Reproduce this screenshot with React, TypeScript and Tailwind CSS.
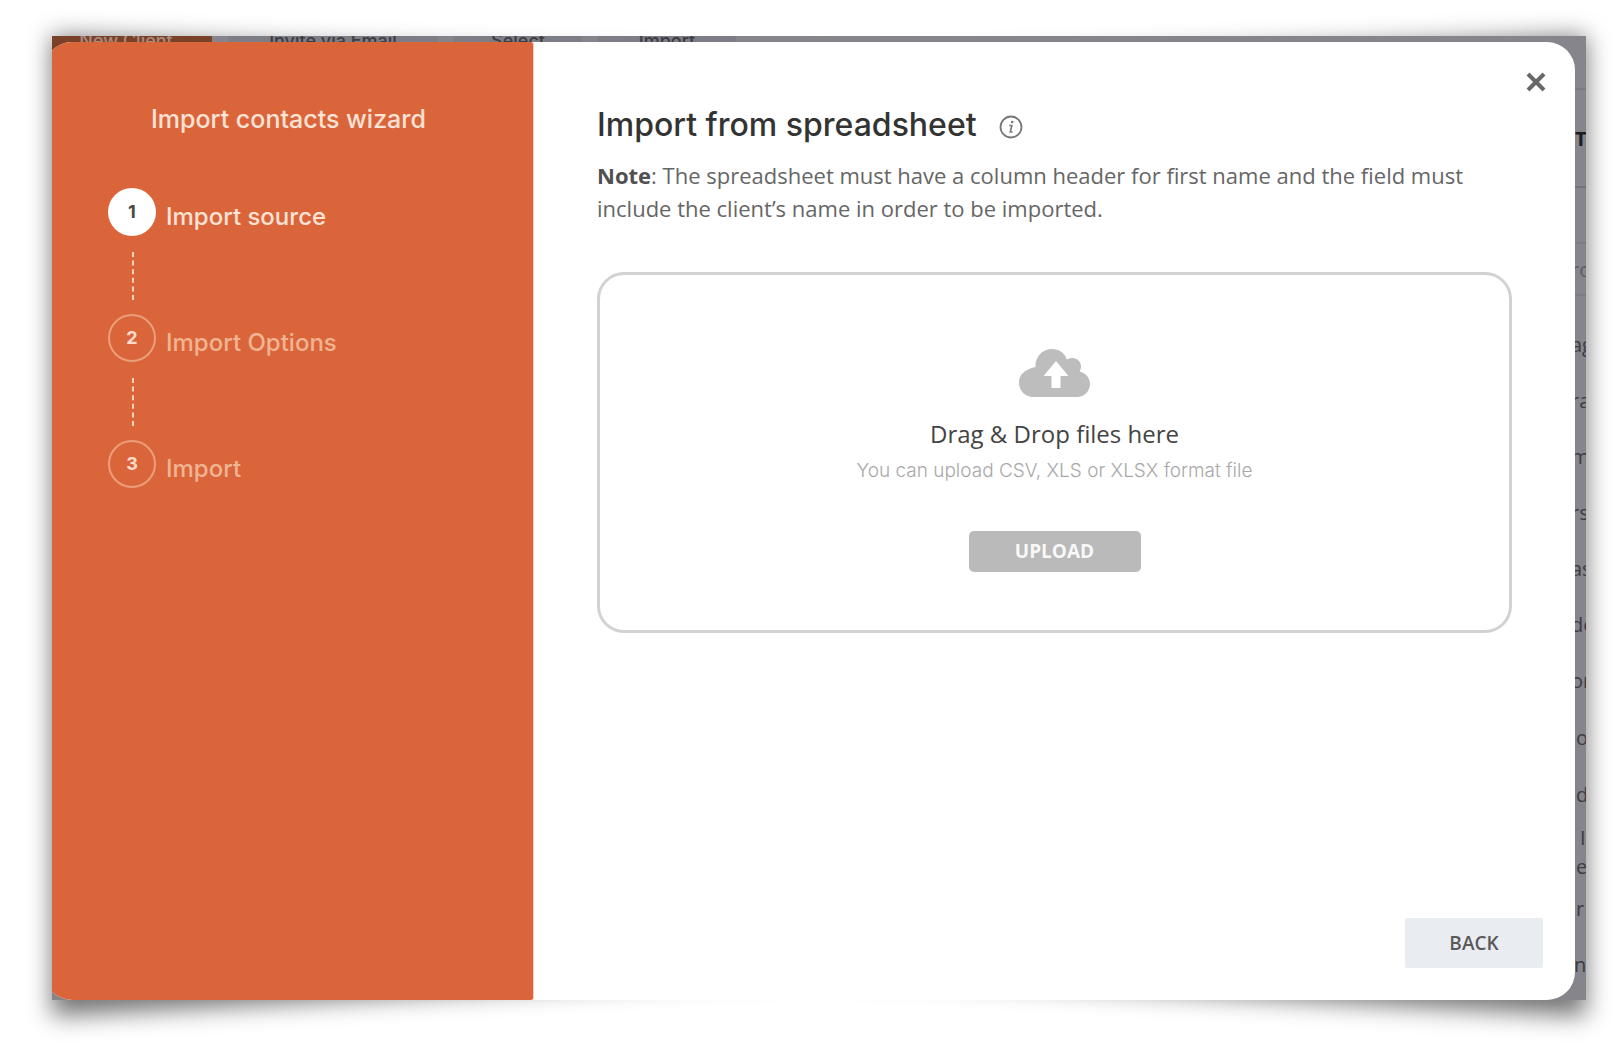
interface Step {
  label: string;
  active?: boolean;
}

const steps: Step[] = [
  { label: 'Import source', active: true },
  { label: 'Import Options' },
  { label: 'Import' },
];

// Clipped first letters of the contact rows behind the dialog
const contactRows = ['ag', 'ra', 'm', 'rs', 'as', 'de', 'or'];
const indentedRows = ['o', 'd'];

function CloudUploadIcon() {
  return (
    <svg className="h-12 w-[71px]" viewBox="0 0 71 48" aria-hidden="true">
      <path
        fill="#bdbdbd"
        d="M14 48C6 48 0 41.500 0 33.500C0 26 5 20.500 16.500 18C16 8 23 0 33 0C40 0 45.500 4 48 10.500C50 9.500 51.500 9 53.500 9C58.500 9 62 13 62 17.500C62 19.500 61.500 20.800 60.500 22.500C67 24 71 29 71 35C71 42 65.500 48 58 48Z"
      />
      <path fill="#fff" d="M37 12L49.500 27H41.500V39H32.500V27H24.500Z" />
    </svg>
  );
}

function InfoIcon() {
  return (
    <svg className="size-6" viewBox="0 0 24 24" fill="none" aria-hidden="true">
      <circle cx="12" cy="12" r="10.500" stroke="#777" strokeWidth="1.800" />
      <circle cx="13.200" cy="7" r="1.300" fill="#777" />
      <path d="M10.300 10.500H12.800L11.300 17H13.500" stroke="#777" strokeWidth="1.600" />
    </svg>
  );
}

function StepItem({ step, index, last }: { step: Step; index: number; last: boolean }) {
  return (
    <li>
      <div className="flex items-center gap-[10px]">
        <span
          className={
            step.active
              ? 'flex size-12 items-center justify-center rounded-full bg-white text-lg font-bold text-[#4a4a4a]'
              : 'flex size-12 items-center justify-center rounded-full border-2 border-[#ea9f7a] text-lg font-bold text-[#fbdccd]'
          }
        >
          {index + 1}
        </span>
        <span
          className={
            step.active
              ? 'pt-[10px] text-2xl leading-8 font-medium text-[#fde3d6]'
              : 'pt-[10px] text-2xl leading-8 font-medium text-[#f1b493]'
          }
        >
          {step.label}
        </span>
      </div>
      {!last && (
        <svg className="my-[14px] ml-6 h-[50px] w-[2px]" viewBox="0 0 2 50" aria-hidden="true">
          <line x1="1" y1="2" x2="1" y2="50" stroke="#f8d3c2" strokeWidth="2" strokeDasharray="5 3.600" />
        </svg>
      )}
    </li>
  );
}

function Backdrop() {
  return (
    <div className="absolute inset-0 flex items-start justify-between overflow-hidden bg-[#85858b]" aria-hidden="true">
      {/* Toolbar */}
      <div className="-mt-[11px] flex gap-4 text-center text-lg leading-8 font-medium text-[#3b3b41]">
        <span className="h-12 w-40 bg-[#7b4128] pr-3 text-[#a98c80]">New Client</span>
        <span className="w-[210px] bg-[#7d7d85]">Invite via Email</span>
        <span className="w-[128px] bg-[#7d7d85]">Select</span>
        <span className="w-[138px] bg-[#7d7d85]">Import</span>
      </div>

      {/* Contacts table */}
      <div className="w-[15px] shrink-0 font-['Open_Sans',sans-serif] text-xl text-[#3c3c42]">
        <div className="h-[54px] border-b-2 border-[#7a7a81]" />
        <div className="h-[98px] border-b-2 border-[#737379] pl-1 leading-[98px] font-bold text-[#1d1d22]">T</div>
        <div className="h-14 border-b-2 border-[#7c7c82]" />
        <div className="mb-[21px] h-[52px] border-b-2 border-[#7c7c82] leading-[52px] text-[#5c5c63]">ro</div>
        {contactRows.map((text) => (
          <div key={text} className="h-14 leading-14">
            {text}
          </div>
        ))}
        {indentedRows.map((text) => (
          <div key={text} className="h-[57px] pl-[5px] leading-[57px]">
            {text}
          </div>
        ))}
        <div className="h-[58px] pl-[5px] leading-[29px]">
          <div className="pl-1">I</div>
          <div>e</div>
        </div>
        <div className="h-14 pl-[5px] leading-14">r</div>
        <div className="h-14 pl-[3px] leading-14">n</div>
      </div>
    </div>
  );
}

export default function App() {
  return (
    <div className="flex min-h-screen bg-white pt-9 pr-[34px] pb-[46px] pl-[52px] font-['Inter',sans-serif]">
      <div className="relative isolate flex min-w-0 flex-1">
        {/* Lifted-corner shadow */}
        <div className="absolute inset-x-0 top-0 -bottom-4 -z-10 blur-[12px]" aria-hidden="true">
          <div className="size-full bg-black/55 [clip-path:polygon(0_0,50%_28px,100%_0,100%_100%,50%_calc(100%-44px),0_100%)]" />
        </div>

        <Backdrop />

        <div className="relative flex min-w-0 flex-1 overflow-hidden">
          <main
            role="dialog"
            aria-labelledby="dialog-title"
            className="mt-[6px] mr-[11px] -ml-2 flex min-w-0 flex-1 overflow-hidden rounded-[28px] bg-white"
          >
            {/* Steps */}
            <aside className="w-[490px] shrink-0 rounded-r-[3px] border-r border-[#f3cdbd] bg-[#db653b] pt-[61px]">
              <h2 className="text-center text-[25px] leading-8 font-medium text-[#fde3d6]">Import contacts wizard</h2>
              <ol className="mt-[53px] pl-16">
                {steps.map((step, i) => (
                  <StepItem key={step.label} step={step} index={i} last={i === steps.length - 1} />
                ))}
              </ol>
            </aside>

            {/* Upload */}
            <section className="flex min-w-0 flex-1 flex-col">
              <div className="flex justify-end pt-[30px] pr-[29px]">
                <button type="button" aria-label="Close" className="text-[#686868]">
                  <svg className="size-5" viewBox="0 0 20 20" stroke="currentColor" strokeWidth="4" aria-hidden="true">
                    <path d="M2 2L18 18M18 2L2 18" />
                  </svg>
                </button>
              </div>

              <div className="mt-[13px] pr-[63px] pl-[63px]">
                <div className="flex items-center gap-[22px]">
                  <h1 id="dialog-title" className="text-[32px] leading-10 font-medium text-[#333]">
                    Import from spreadsheet
                  </h1>
                  <button type="button" aria-label="More information" className="pt-1">
                    <InfoIcon />
                  </button>
                </div>
                <p className="mt-[14px] max-w-[880px] font-['Open_Sans',sans-serif] text-[22px] leading-[33px] text-[#666]">
                  <b className="text-[#505050]">Note</b>: The spreadsheet must have a column header for first name and
                  the field must include the client’s name in order to be imported.
                </p>

                <div className="mt-[47px] flex flex-col items-center rounded-[27px] border-3 border-[#d2d2d2] pt-[74px] pb-[58px]">
                  <CloudUploadIcon />
                  <p className="mt-[21px] font-['Open_Sans',sans-serif] text-2xl leading-8 text-[#444]">
                    Drag &amp; Drop files here
                  </p>
                  <p className="mt-[7px] text-[19px] leading-7 font-light text-[#a8a8a8]">
                    You can upload CSV, XLS or XLSX format file
                  </p>
                  <button
                    type="button"
                    className="mt-[46px] h-[41px] w-[172px] rounded-[5px] bg-[#bababa] font-['Open_Sans',sans-serif] text-[19px] font-bold text-[#f8f8f8]"
                  >
                    UPLOAD
                  </button>
                </div>
              </div>

              <div className="mt-auto flex justify-end pr-8 pb-8">
                <button
                  type="button"
                  className="h-[50px] w-[138px] rounded-xs bg-[#e9ecf1] font-['Open_Sans',sans-serif] text-[19px] font-semibold text-[#5a5a5a]"
                >
                  BACK
                </button>
              </div>
            </section>
          </main>
        </div>
      </div>
    </div>
  );
}
